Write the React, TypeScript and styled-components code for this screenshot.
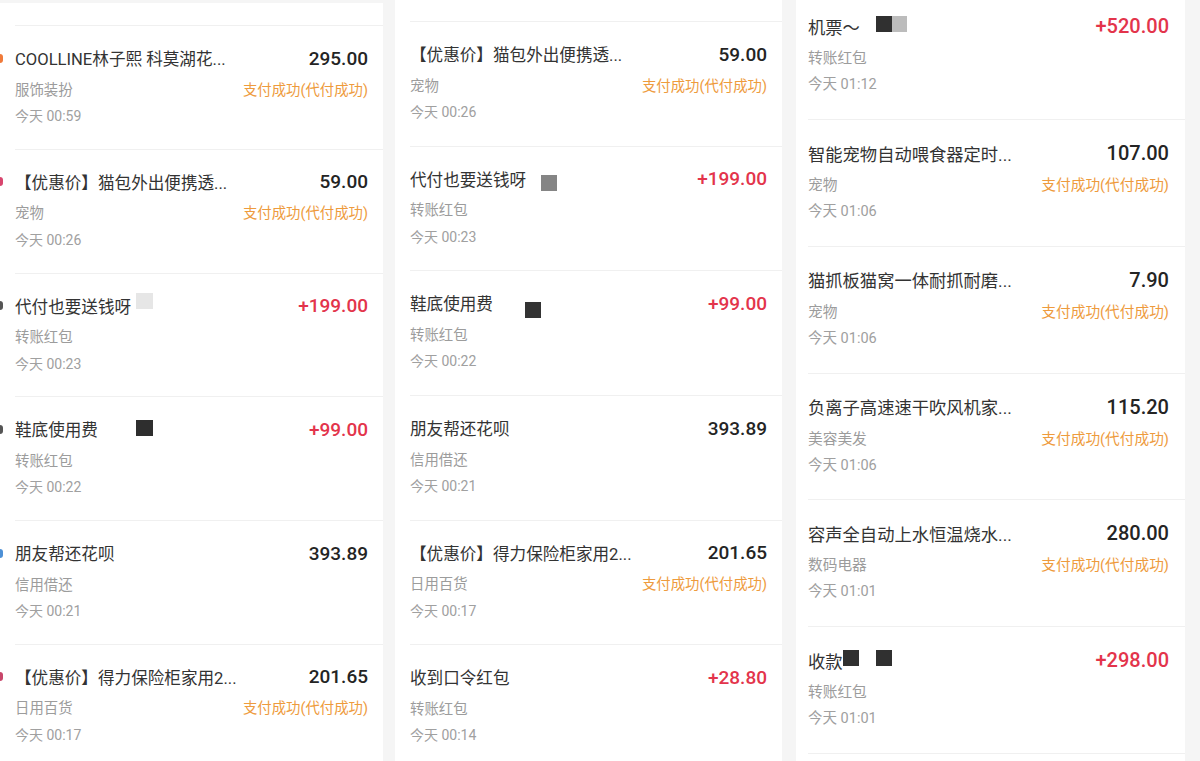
import React from 'react';
import styled, { createGlobalStyle } from 'styled-components';

const GlobalStyle = createGlobalStyle`
  html, body {
    margin: 0;
    padding: 0;
    background: #f5f5f5;
    font-family: Roboto, "Noto Sans CJK SC", sans-serif;
  }
`;

type Mark = { color: string; gap: number; dy?: number; w?: number };

type Bill = {
  title: string;
  marks?: Mark[];
  amount: string;
  category: string;
  paid?: boolean;
  time: string;
  edge?: string;
};

type Scale = {
  title: number;
  amount: number;
  sub: number;
  time: number;
  rowH: number;
  padTop: number;
  gap: number;
};

const small: Scale = { title: 16.6, amount: 19, sub: 14.4, time: 14, rowH: 124.4, padTop: 20, gap: 8 };
const large: Scale = { title: 17.3, amount: 20, sub: 14.7, time: 14.5, rowH: 126.8, padTop: 21, gap: 8.5 };

const Page = styled.div`
  display: flex;
  height: 761px;
  overflow: hidden;
  background: #f5f5f5;
`;

const Panel = styled.section<{ $w: number; $ml: number; $top: number }>`
  flex-shrink: 0;
  width: ${({ $w }) => $w}px;
  margin-left: ${({ $ml }) => $ml}px;
  margin-top: ${({ $top }) => $top}px;
  background: #fff;
  overflow: hidden;
`;

const List = styled.div<{ $shift: number }>`
  margin-top: ${({ $shift }) => $shift}px;
`;

const Row = styled.div<{ $h: number; $ml: number; $pr: number; $pt: number }>`
  box-sizing: border-box;
  height: ${({ $h }) => $h}px;
  margin-left: ${({ $ml }) => $ml}px;
  padding: ${({ $pt, $pr }) => `${$pt}px ${$pr}px 0 0`};
  border-top: 1px solid #f0f0f0;
`;

const Tail = styled.div<{ $ml: number }>`
  margin-left: ${({ $ml }) => $ml}px;
  border-top: 1px solid #f0f0f0;
`;

const TopLine = styled.div`
  display: flex;
  align-items: center;
  justify-content: space-between;
  height: 24px;
`;

const Title = styled.div<{ $size: number }>`
  display: flex;
  align-items: center;
  font-size: ${({ $size }) => $size}px;
  color: #333;
  white-space: nowrap;
`;

const Edge = styled.i<{ $color: string }>`
  flex-shrink: 0;
  width: 3px;
  height: 9px;
  margin-left: -15px;
  margin-right: 12px;
  border-radius: 0 5px 5px 0;
  background: ${({ $color }) => $color};
`;

const Redact = styled.span<{ $color: string; $gap: number; $dy: number; $w: number }>`
  flex-shrink: 0;
  width: ${({ $w }) => $w}px;
  height: 16px;
  margin-left: ${({ $gap }) => $gap}px;
  margin-top: ${({ $dy }) => ($dy > 0 ? $dy * 2 : 0)}px;
  margin-bottom: ${({ $dy }) => ($dy < 0 ? -$dy * 2 : 0)}px;
  background: ${({ $color }) => $color};
`;

const Amount = styled.span<{ $size: number; $plus: boolean }>`
  font-size: ${({ $size }) => $size}px;
  font-weight: 500;
  color: ${({ $plus }) => ($plus ? '#e3344b' : '#242424')};
`;

const SubLine = styled.div<{ $size: number; $gap: number }>`
  display: flex;
  align-items: center;
  justify-content: space-between;
  height: 20px;
  margin-top: ${({ $gap }) => $gap}px;
  font-size: ${({ $size }) => $size}px;
  color: #9c9c9c;
  white-space: nowrap;
`;

const Status = styled.span`
  color: #ee9b3d;
`;

const Time = styled.div<{ $size: number; $gap: number }>`
  height: 20px;
  line-height: 20px;
  margin-top: ${({ $gap }) => $gap}px;
  font-size: ${({ $size }) => $size}px;
  color: #a0a0a0;
`;

const PAID = '支付成功(代付成功)';

const left: Bill[] = [
  { title: 'COOLLINE林子熙 科莫湖花...', amount: '295.00', category: '服饰装扮', paid: true, time: '今天 00:59', edge: '#f07a3a' },
  { title: '【优惠价】猫包外出便携透...', amount: '59.00', category: '宠物', paid: true, time: '今天 00:26', edge: '#d8466e' },
  { title: '代付也要送钱呀', marks: [{ color: '#e6e6e6', gap: 5, dy: -5, w: 17 }], amount: '+199.00', category: '转账红包', time: '今天 00:23', edge: '#555' },
  { title: '鞋底使用费', marks: [{ color: '#2e2e2e', gap: 38, dy: -1, w: 17 }], amount: '+99.00', category: '转账红包', time: '今天 00:22', edge: '#555' },
  { title: '朋友帮还花呗', amount: '393.89', category: '信用借还', time: '今天 00:21', edge: '#4d90d6' },
  { title: '【优惠价】得力保险柜家用2...', amount: '201.65', category: '日用百货', paid: true, time: '今天 00:17', edge: '#c8466a' }
];

const middle: Bill[] = [
  { title: '【优惠价】猫包外出便携透...', amount: '59.00', category: '宠物', paid: true, time: '今天 00:26' },
  { title: '代付也要送钱呀', marks: [{ color: '#858585', gap: 15, dy: 4 }], amount: '+199.00', category: '转账红包', time: '今天 00:23' },
  { title: '鞋底使用费', marks: [{ color: '#333', gap: 32, dy: 7 }], amount: '+99.00', category: '转账红包', time: '今天 00:22' },
  { title: '朋友帮还花呗', amount: '393.89', category: '信用借还', time: '今天 00:21' },
  { title: '【优惠价】得力保险柜家用2...', amount: '201.65', category: '日用百货', paid: true, time: '今天 00:17' },
  { title: '收到口令红包', amount: '+28.80', category: '转账红包', time: '今天 00:14' }
];

const right: Bill[] = [
  {
    title: '机票～',
    marks: [
      { color: '#303030', gap: 16, dy: -2 },
      { color: '#bcbcbc', gap: 0, dy: -2, w: 15 }
    ],
    amount: '+520.00',
    category: '转账红包',
    time: '今天 01:12'
  },
  { title: '智能宠物自动喂食器定时...', amount: '107.00', category: '宠物', paid: true, time: '今天 01:06' },
  { title: '猫抓板猫窝一体耐抓耐磨...', amount: '7.90', category: '宠物', paid: true, time: '今天 01:06' },
  { title: '负离子高速速干吹风机家...', amount: '115.20', category: '美容美发', paid: true, time: '今天 01:06' },
  { title: '容声全自动上水恒温烧水...', amount: '280.00', category: '数码电器', paid: true, time: '今天 01:01' },
  {
    title: '收款',
    marks: [
      { color: '#303030', gap: 0, dy: -2 },
      { color: '#303030', gap: 17, dy: -2 }
    ],
    amount: '+298.00',
    category: '转账红包',
    time: '今天 01:01'
  }
];

function BillRow({ bill, scale, ml, pr }: { bill: Bill; scale: Scale; ml: number; pr: number }) {
  return (
    <Row $h={scale.rowH} $ml={ml} $pr={pr} $pt={scale.padTop}>
      <TopLine>
        <Title $size={scale.title}>
          {bill.edge && <Edge $color={bill.edge} />}
          <span>{bill.title}</span>
          {bill.marks?.map((m, i) => (
            <Redact key={i} $color={m.color} $gap={m.gap} $dy={m.dy ?? 0} $w={m.w ?? 16} />
          ))}
        </Title>
        <Amount $size={scale.amount} $plus={bill.amount.startsWith('+')}>
          {bill.amount}
        </Amount>
      </TopLine>
      <SubLine $size={scale.sub} $gap={scale.gap}>
        <span>{bill.category}</span>
        {bill.paid && <Status>{PAID}</Status>}
      </SubLine>
      <Time $size={scale.time} $gap={scale.gap}>
        {bill.time}
      </Time>
    </Row>
  );
}

const leftScale: Scale = { ...small, rowH: 123.8 };
const middleScale: Scale = { ...small, rowH: 124.7 };

export default function App() {
  return (
    <>
      <GlobalStyle />
      <Page>
        <Panel $w={383} $ml={0} $top={3}>
          <List $shift={22}>
            {left.map((b, i) => (
              <BillRow key={i} bill={b} scale={leftScale} ml={15} pr={15} />
            ))}
          </List>
        </Panel>
        <Panel $w={387} $ml={12} $top={0}>
          <List $shift={21}>
            {middle.map((b, i) => (
              <BillRow key={i} bill={b} scale={middleScale} ml={15} pr={15} />
            ))}
          </List>
        </Panel>
        <Panel $w={389} $ml={14} $top={0}>
          <List $shift={-7.8}>
            {right.map((b, i) => (
              <BillRow key={i} bill={b} scale={large} ml={12} pr={16} />
            ))}
            <Tail $ml={12} />
          </List>
        </Panel>
      </Page>
    </>
  );
}
